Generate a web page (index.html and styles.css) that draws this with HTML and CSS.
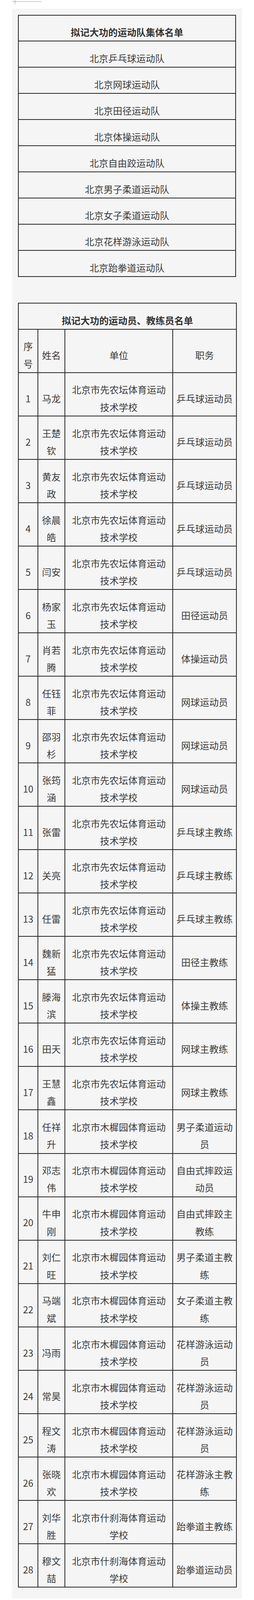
FILE: index.html
```html
<!DOCTYPE html>
<html lang="zh-CN">
<head>
<meta charset="utf-8">
<title>拟记大功名单</title>
<link rel="stylesheet" href="styles.css">
</head>
<body>
<svg class="mark" width="80" height="12" viewBox="0 0 80 12" aria-hidden="true">
  <line x1="0" y1="4" x2="76" y2="4" stroke="#9a9a9a" stroke-width="1"/>
  <line x1="8.5" y1="0" x2="8.5" y2="11" stroke="#9a9a9a" stroke-width="1"/>
</svg>
<div class="panel">
  <table class="list teams">
    <tbody>
      <tr><td class="title">拟记大功的运动队集体名单</td></tr>
      <tr><td>北京乒乓球运动队</td></tr>
      <tr><td>北京网球运动队</td></tr>
      <tr><td>北京田径运动队</td></tr>
      <tr><td>北京体操运动队</td></tr>
      <tr><td>北京自由跤运动队</td></tr>
      <tr><td>北京男子柔道运动队</td></tr>
      <tr><td>北京女子柔道运动队</td></tr>
      <tr><td>北京花样游泳运动队</td></tr>
      <tr><td>北京跆拳道运动队</td></tr>
    </tbody>
  </table>

  <table class="list people">
    <colgroup>
      <col class="c-no">
      <col class="c-name">
      <col class="c-unit">
      <col class="c-job">
    </colgroup>
    <tbody>
      <tr><td class="title" colspan="4">拟记大功的运动员、教练员名单</td></tr>
      <tr><td>序号</td><td>姓名</td><td>单位</td><td>职务</td></tr>
      <tr><td>1</td><td>马龙</td><td>北京市先农坛体育运动技术学校</td><td>乒乓球运动员</td></tr>
      <tr><td>2</td><td>王楚钦</td><td>北京市先农坛体育运动技术学校</td><td>乒乓球运动员</td></tr>
      <tr><td>3</td><td>黄友政</td><td>北京市先农坛体育运动技术学校</td><td>乒乓球运动员</td></tr>
      <tr><td>4</td><td>徐晨皓</td><td>北京市先农坛体育运动技术学校</td><td>乒乓球运动员</td></tr>
      <tr><td>5</td><td>闫安</td><td>北京市先农坛体育运动技术学校</td><td>乒乓球运动员</td></tr>
      <tr><td>6</td><td>杨家玉</td><td>北京市先农坛体育运动技术学校</td><td>田径运动员</td></tr>
      <tr><td>7</td><td>肖若腾</td><td>北京市先农坛体育运动技术学校</td><td>体操运动员</td></tr>
      <tr><td>8</td><td>任钰菲</td><td>北京市先农坛体育运动技术学校</td><td>网球运动员</td></tr>
      <tr><td>9</td><td>邵羽杉</td><td>北京市先农坛体育运动技术学校</td><td>网球运动员</td></tr>
      <tr><td>10</td><td>张筠涵</td><td>北京市先农坛体育运动技术学校</td><td>网球运动员</td></tr>
      <tr><td>11</td><td>张雷</td><td>北京市先农坛体育运动技术学校</td><td>乒乓球主教练</td></tr>
      <tr><td>12</td><td>关亮</td><td>北京市先农坛体育运动技术学校</td><td>乒乓球主教练</td></tr>
      <tr><td>13</td><td>任雷</td><td>北京市先农坛体育运动技术学校</td><td>乒乓球主教练</td></tr>
      <tr><td>14</td><td>魏新猛</td><td>北京市先农坛体育运动技术学校</td><td>田径主教练</td></tr>
      <tr><td>15</td><td>滕海滨</td><td>北京市先农坛体育运动技术学校</td><td>体操主教练</td></tr>
      <tr><td>16</td><td>田天</td><td>北京市先农坛体育运动技术学校</td><td>网球主教练</td></tr>
      <tr><td>17</td><td>王慧鑫</td><td>北京市先农坛体育运动技术学校</td><td>网球主教练</td></tr>
      <tr><td>18</td><td>任祥升</td><td>北京市木樨园体育运动技术学校</td><td>男子柔道运动员</td></tr>
      <tr><td>19</td><td>邓志伟</td><td>北京市木樨园体育运动技术学校</td><td>自由式摔跤运动员</td></tr>
      <tr><td>20</td><td>牛申刚</td><td>北京市木樨园体育运动技术学校</td><td>自由式摔跤主教练</td></tr>
      <tr><td>21</td><td>刘仁旺</td><td>北京市木樨园体育运动技术学校</td><td>男子柔道主教练</td></tr>
      <tr><td>22</td><td>马端斌</td><td>北京市木樨园体育运动技术学校</td><td>女子柔道主教练</td></tr>
      <tr><td>23</td><td>冯雨</td><td>北京市木樨园体育运动技术学校</td><td>花样游泳运动员</td></tr>
      <tr><td>24</td><td>常昊</td><td>北京市木樨园体育运动技术学校</td><td>花样游泳运动员</td></tr>
      <tr><td>25</td><td>程文涛</td><td>北京市木樨园体育运动技术学校</td><td>花样游泳运动员</td></tr>
      <tr><td>26</td><td>张晓欢</td><td>北京市木樨园体育运动技术学校</td><td>花样游泳主教练</td></tr>
      <tr><td>27</td><td>刘华胜</td><td>北京市什刹海体育运动学校</td><td>跆拳道主教练</td></tr>
      <tr><td>28</td><td>穆文喆</td><td>北京市什刹海体育运动学校</td><td>跆拳道运动员</td></tr>
    </tbody>
  </table>
</div>
</body>
</html>
```
FILE: styles.css
```css
html, body {
  margin: 0;
  padding: 0;
  background: #ffffff;
}

body {
  font-family: "Noto Sans CJK SC", "Noto Sans", sans-serif;
  color: #3c3c3c;
  font-size: 24px;
}

.mark {
  display: block;
  margin-left: 30px;
}

.panel {
  margin: 10px 31px 0;
  padding: 15.5px 15px 28px;
  background: #f5f5f5;
}

.list {
  width: 100%;
  border-collapse: collapse;
  table-layout: fixed;
}

.list td {
  border: 2px solid #262626;
  padding: 20.8px 8px 0;
  line-height: 44.13px;
  text-align: center;
  vertical-align: middle;
  word-break: break-all;
}

.list td.title {
  font-weight: bold;
  color: #333333;
}

.teams {
  margin-bottom: 66px;
}

.c-no { width: 50px; }
.c-name { width: 69px; }
.c-unit { width: 276px; }
.c-job { width: 163px; }
```
